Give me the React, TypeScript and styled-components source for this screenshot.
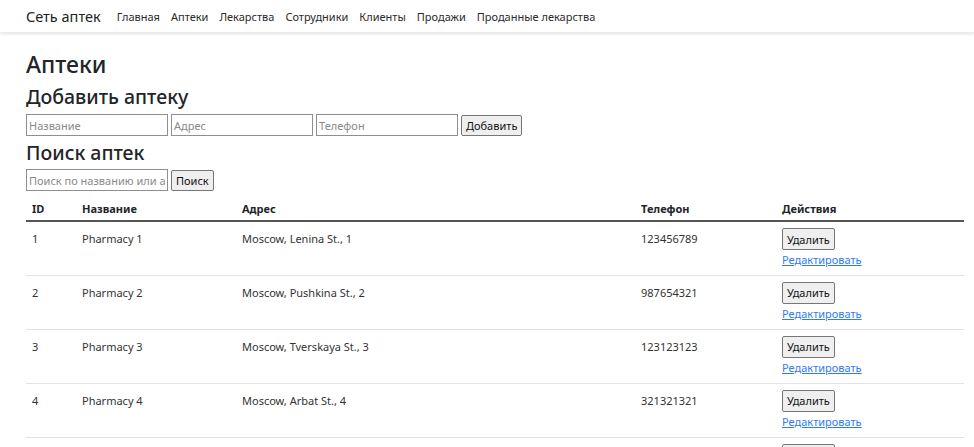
import React from "react";
import styled, { createGlobalStyle } from "styled-components";

interface Pharmacy {
  id: number;
  name: string;
  address: string;
  phone: string;
}

const pharmacies: Pharmacy[] = [
  { id: 1, name: "Pharmacy 1", address: "Moscow, Lenina St., 1", phone: "123456789" },
  { id: 2, name: "Pharmacy 2", address: "Moscow, Pushkina St., 2", phone: "987654321" },
  { id: 3, name: "Pharmacy 3", address: "Moscow, Tverskaya St., 3", phone: "123123123" },
  { id: 4, name: "Pharmacy 4", address: "Moscow, Arbat St., 4", phone: "321321321" },
  { id: 5, name: "Pharmacy 5", address: "Moscow, Tverskaya St., 5", phone: "555555555" },
];

const navLinks = ["Главная", "Аптеки", "Лекарства", "Сотрудники", "Клиенты", "Продажи", "Проданные лекарства"];

const GlobalStyle = createGlobalStyle`
  body {
    margin: 0;
    font-family: "Noto Sans", "Open Sans", sans-serif;
    color: #212529;
    background: #fff;
    overflow: hidden;
  }
`;

const NavBar = styled.nav`
  display: flex;
  align-items: center;
  height: 33px;
  padding: 0 26px;
  box-shadow: 0 1px 3px rgba(0, 0, 0, 0.12);
  border-bottom: 1px solid #ececec;
  box-sizing: border-box;
`;

const Brand = styled.a`
  font-size: 14.5px;
  color: #222;
  margin-right: 16px;
  text-decoration: none;
`;

const NavLinks = styled.div`
  display: flex;
  gap: 11px;
`;

const NavLink = styled.a`
  font-size: 11px;
  color: #2b2b2b;
  text-decoration: none;
`;

const Container = styled.main`
  padding: 14px 10px 0 26px;
`;

const Title = styled.h1`
  font-size: 23px;
  font-weight: 500;
  margin: 0;
  line-height: 34px;
`;

const SubTitle = styled.h2`
  font-size: 19.5px;
  font-weight: 500;
  margin: 0;
  line-height: 32px;
`;

const FormRow = styled.div<{ $height: number }>`
  display: flex;
  align-items: center;
  gap: 3px;
  height: ${(p) => p.$height}px;
`;

const Input = styled.input`
  width: 142px;
  height: 22px;
  box-sizing: border-box;
  border: 1px solid #8f8f8f;
  padding: 0 2px;
  font-family: "Noto Sans", sans-serif;
  font-size: 11px;
  &::placeholder {
    color: #8a8a8a;
  }
`;

const Button = styled.button`
  height: 21px;
  box-sizing: border-box;
  padding: 0 4px;
  border: 1px solid #767676;
  border-radius: 2px;
  background: #efefef;
  font-family: "Noto Sans", sans-serif;
  font-size: 11px;
  color: #111;
`;

const Table = styled.table`
  width: 938px;
  margin-top: 5px;
  border-collapse: collapse;
  table-layout: fixed;
  font-size: 11px;
`;

const HeadCell = styled.th`
  text-align: left;
  font-weight: 700;
  padding: 0 6px;
  height: 24px;
  border-bottom: 2px solid #555;
  vertical-align: middle;
`;

const Cell = styled.td`
  padding: 6px 6px 0;
  height: 54px;
  line-height: 22px;
  box-sizing: border-box;
  vertical-align: top;
  border-bottom: 1px solid #e2e3e5;
  color: #333;
`;

const Actions = styled.div`
  display: flex;
  flex-direction: column;
  align-items: flex-start;
  gap: 2px;
  line-height: normal;
`;

const DeleteButton = styled(Button)`
  height: 22px;
`;

const EditLink = styled.a`
  color: #2f7bf5;
  text-decoration: underline;
  font-size: 11px;
`;

export default function App() {
  return (
    <>
      <GlobalStyle />
      <NavBar>
        <Brand>Сеть аптек</Brand>
        <NavLinks>
          {navLinks.map((l) => (
            <NavLink key={l}>{l}</NavLink>
          ))}
        </NavLinks>
      </NavBar>
      <Container>
        <Title>Аптеки</Title>
        <SubTitle>Добавить аптеку</SubTitle>
        <FormRow $height={24}>
          <Input placeholder="Название" />
          <Input placeholder="Адрес" />
          <Input placeholder="Телефон" />
          <Button>Добавить</Button>
        </FormRow>
        <SubTitle>Поиск аптек</SubTitle>
        <FormRow $height={22}>
          <Input placeholder="Поиск по названию или адресу" />
          <Button>Поиск</Button>
        </FormRow>
        <Table>
          <colgroup>
            <col style={{ width: 50 }} />
            <col style={{ width: 160 }} />
            <col style={{ width: 399 }} />
            <col style={{ width: 141 }} />
            <col style={{ width: 188 }} />
          </colgroup>
          <thead>
            <tr>
              <HeadCell>ID</HeadCell>
              <HeadCell>Название</HeadCell>
              <HeadCell>Адрес</HeadCell>
              <HeadCell>Телефон</HeadCell>
              <HeadCell>Действия</HeadCell>
            </tr>
          </thead>
          <tbody>
            {pharmacies.map((p) => (
              <tr key={p.id}>
                <Cell>{p.id}</Cell>
                <Cell>{p.name}</Cell>
                <Cell>{p.address}</Cell>
                <Cell>{p.phone}</Cell>
                <Cell>
                  <Actions>
                    <DeleteButton>Удалить</DeleteButton>
                    <EditLink href="#">Редактировать</EditLink>
                  </Actions>
                </Cell>
              </tr>
            ))}
          </tbody>
        </Table>
      </Container>
    </>
  );
}
